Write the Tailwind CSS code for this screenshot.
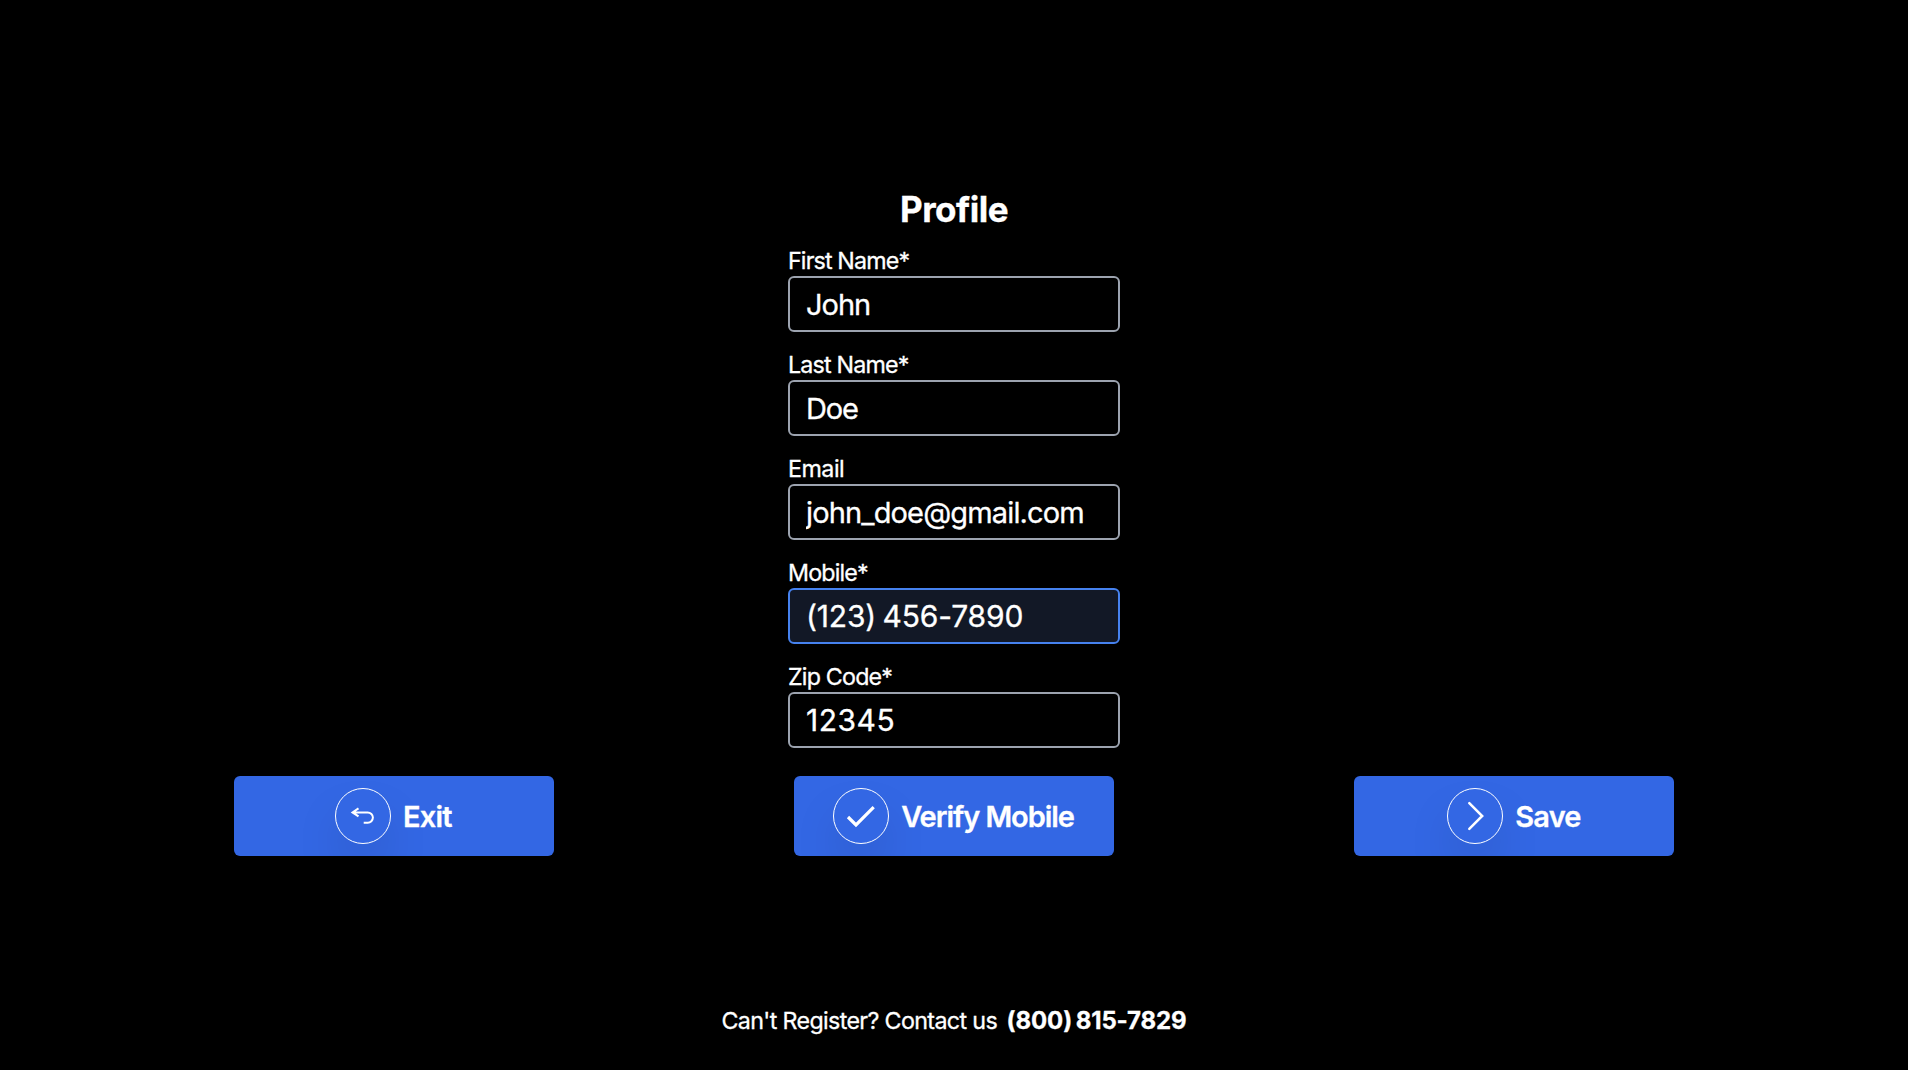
<!DOCTYPE html>
<html lang="en">
<head>
<meta charset="utf-8">
<title>Profile</title>
<script src="https://cdn.jsdelivr.net/npm/@tailwindcss/browser@4"></script>
</head>
<body class="flex h-screen flex-col items-center overflow-hidden bg-black pt-[189px] font-['Inter',sans-serif] text-white [-webkit-text-stroke:0.3px_white]">
  <h1 class="h-10 text-[35px] leading-10 font-bold tracking-[-0.5px]">Profile</h1>

  <form class="mt-[15px] flex w-[332px] flex-col gap-4 text-[23.25px] whitespace-nowrap">
    <label class="flex h-[88px] flex-col justify-between leading-[34px] tracking-[-0.86px]">First Name*
      <input class="-mt-0.5 h-14 w-full rounded-md border-2 border-[#9ca3af] px-4 text-[29px] tracking-[-1px] outline-none" value="John">
    </label>
    <label class="flex h-[88px] flex-col justify-between leading-[34px] tracking-[-0.82px]">Last Name*
      <input class="-mt-0.5 h-14 w-full rounded-md border-2 border-[#9ca3af] px-4 text-[29px] tracking-[-1.2px] outline-none" value="Doe">
    </label>
    <label class="flex h-[88px] flex-col justify-between leading-[34px] tracking-[-0.5px]">Email
      <input class="-mt-0.5 h-14 w-full rounded-md border-2 border-[#9ca3af] px-4 text-[29px] tracking-[-0.85px] outline-none" value="john_doe@gmail.com">
    </label>
    <label class="flex h-[88px] flex-col justify-between leading-[34px] tracking-[-0.85px]">Mobile*
      <input class="-mt-0.5 h-14 w-full rounded-md border-2 border-[#4682ef] bg-[#121826] px-4 text-[30px] tracking-[-0.15px] outline-none [word-spacing:-2px]" value="(123) 456-7890">
    </label>
    <label class="flex h-[88px] flex-col justify-between leading-[34px] tracking-[-0.8px]">Zip Code*
      <input class="-mt-0.5 h-14 w-full rounded-md border-2 border-[#9ca3af] px-4 text-[30px] tracking-[0.5px] outline-none" value="12345">
    </label>
  </form>

  <div class="mt-7 flex w-[1440px] justify-between text-[29px] font-semibold whitespace-nowrap">
    <button class="flex h-20 w-80 items-center justify-center gap-3 overflow-hidden rounded-md bg-[#3367e4]">
      <span class="flex size-14 shrink-0 items-center justify-center rounded-full border border-white shadow-2xl">
        <svg class="size-8" viewBox="0 0 32 32" fill="none" stroke="currentColor" stroke-width="2"><path d="M11.5 8.4 5.5 12.4 11.5 16.4M5.7 12.4h15a5.2 5.2 0 0 1 0 10.4h-4"/></svg>
      </span>
      <span class="w-[50px] pt-0.5 text-left tracking-[-0.8px]">Exit</span>
    </button>
    <button class="flex h-20 w-80 items-center justify-center gap-3 overflow-hidden rounded-md bg-[#3367e4]">
      <span class="flex size-14 shrink-0 items-center justify-center rounded-full border border-white shadow-2xl">
        <svg class="size-8" viewBox="0 0 32 32" fill="none" stroke="currentColor" stroke-width="3.2"><path d="M3 17 11 25 28.7 7.2"/></svg>
      </span>
      <span class="w-[173.5px] pt-0.5 text-left tracking-[-1.06px]">Verify Mobile</span>
    </button>
    <button class="flex h-20 w-80 items-center justify-center gap-3 overflow-hidden rounded-md bg-[#3367e4]">
      <span class="flex size-14 shrink-0 items-center justify-center rounded-full border border-white shadow-2xl">
        <svg class="size-8" viewBox="0 0 32 32" fill="none" stroke="currentColor" stroke-width="2.5" stroke-linecap="round"><path d="M10.3 3.2 23.2 16 10.3 28.8"/></svg>
      </span>
      <span class="w-[65.5px] pt-0.5 text-left tracking-[-0.8px]">Save</span>
    </button>
  </div>

  <footer class="mt-[149px] flex w-[465px] justify-between text-[23.25px] leading-8 whitespace-nowrap">
    <span class="tracking-[-0.64px]">Can't Register? Contact us</span>
    <span class="text-[24px] font-bold tracking-[-0.12px] [word-spacing:-2px]">(800) 815-7829</span>
  </footer>
</body>
</html>
